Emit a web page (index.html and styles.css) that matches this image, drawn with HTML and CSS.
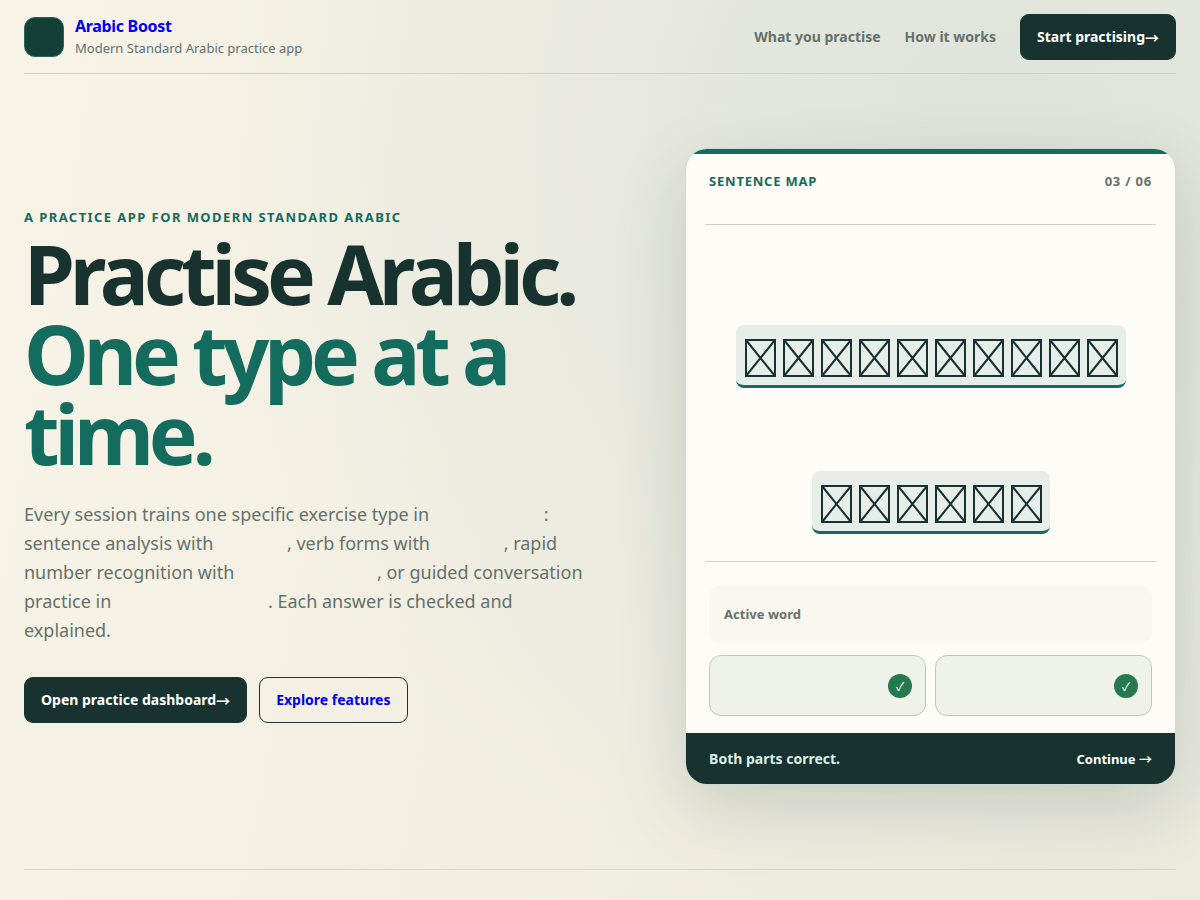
FILE: index.html
```html
<!DOCTYPE html>
<html lang="en">
<head>
<meta charset="utf-8">
<meta name="viewport" content="width=device-width, initial-scale=1">
<title>Arabic Boost</title>
<link rel="stylesheet" href="styles.css">
</head>
<body>
<svg class="defs" aria-hidden="true">
  <symbol id="letter" viewBox="0 0 38 38">
    <path d="M5 1H34V37H5Z M5 1L34 37 M34 1L5 37" fill="none" stroke="currentColor" stroke-width="2"/>
  </symbol>
</svg>
<div class="page">
  <header class="header">
    <a class="brand" href="#">
      <span class="brand-mark"></span>
      <span class="brand-text"><strong>Arabic Boost</strong><small>Modern Standard Arabic practice app</small></span>
    </a>
    <nav class="nav">
      <a href="#practice">What you practise</a>
      <a href="#how">How it works</a>
      <a class="button primary" href="#start">Start practising<span class="arrow">→</span></a>
    </nav>
  </header>
  <main class="hero">
    <section class="intro">
      <p class="eyebrow">A practice app for Modern Standard Arabic</p>
      <h1>Practise Arabic. <span>One type at a time.</span></h1>
      <p class="lead">Every session trains one specific exercise type in <i class="term wide"></i>: sentence analysis with <i class="term short"></i>, verb forms with <i class="term short"></i>, rapid number recognition with <i class="term large"></i>, or guided conversation practice in <i class="term full"></i>. Each answer is checked and explained.</p>
      <div class="actions">
        <a class="button primary" href="#start">Open practice dashboard<span class="arrow">→</span></a>
        <a class="button outline" href="#practice">Explore features</a>
      </div>
    </section>
    <section class="card" aria-label="Sentence map">
      <div class="card-head"><span>Sentence map</span><span class="count">03 / 06</span></div>
      <div class="sentence">
        <div class="word">
          <svg><use href="#letter"/></svg><svg><use href="#letter"/></svg><svg><use href="#letter"/></svg><svg><use href="#letter"/></svg><svg><use href="#letter"/></svg><svg><use href="#letter"/></svg><svg><use href="#letter"/></svg><svg><use href="#letter"/></svg><svg><use href="#letter"/></svg><svg><use href="#letter"/></svg>
        </div>
        <div class="word">
          <svg><use href="#letter"/></svg><svg><use href="#letter"/></svg><svg><use href="#letter"/></svg><svg><use href="#letter"/></svg><svg><use href="#letter"/></svg><svg><use href="#letter"/></svg>
        </div>
      </div>
      <div class="answers">
        <div class="active">Active word</div>
        <div class="answer"><span class="check">✓</span></div>
        <div class="answer"><span class="check">✓</span></div>
      </div>
      <div class="card-foot"><span>Both parts correct.</span><button type="button">Continue <span class="arrow">→</span></button></div>
    </section>
  </main>
</div>
</body>
</html>
```
FILE: styles.css
```css
* { box-sizing: border-box; }

body {
  margin: 0;
  min-height: 100vh;
  font-family: "Noto Sans", "Noto Sans CJK JP", sans-serif;
  color: #18322f;
  background:
    radial-gradient(circle at 82% 16%, rgba(211, 221, 216, 0.6), transparent 64%),
    linear-gradient(100deg, #f8f3e7 0%, #f2efe2 45%, #ecebde 100%);
}

.defs { display: none; }
.page { padding: 0 24px; }

.header {
  display: flex;
  align-items: center;
  justify-content: space-between;
  height: 74px;
  border-bottom: 1px solid #cfd2c7;
}

.brand { display: flex; align-items: center; gap: 11px; text-decoration: none; }
.brand-mark {
  width: 40px;
  height: 40px;
  border: 1px solid #29665a;
  border-radius: 11px;
  background: #133f36;
}
.brand-text { display: grid; }
.brand-text strong { font-size: 16px; line-height: 22px; letter-spacing: -0.02em; color: #0000ee; }
.brand-text small { font-size: 13px; line-height: 22px; color: #64716d; }

.nav { display: flex; align-items: center; gap: 24px; }
.nav a { font-size: 14px; font-weight: 700; text-decoration: none; color: #64716d; }

.button {
  display: inline-flex;
  align-items: center;
  height: 46px;
  padding: 0 16px;
  border: 1px solid #18322f;
  border-radius: 9px;
  font-size: 14px;
  line-height: 20px;
  font-weight: 700;
  text-decoration: none;
}
.nav .button.primary, .button.primary { background: #18322f; color: #fff; }
.button.outline { color: #0000ee; }
.arrow { font-family: "Noto Sans CJK JP", sans-serif; line-height: 20px; }

.hero {
  display: grid;
  grid-template-columns: minmax(0, 12fr) minmax(0, 10fr);
  gap: 72px;
  align-items: center;
  min-height: 796px;
  padding: 74px 0 84px;
  border-bottom: 1px solid #d5d5c6;
}

.intro { padding-bottom: 4px; }
.eyebrow {
  margin: 0 0 6px;
  font-size: 13px;
  line-height: 20px;
  font-weight: 700;
  letter-spacing: 0.11em;
  text-transform: uppercase;
  color: #146c5e;
}
h1 {
  margin: 0;
  font-size: 82px;
  line-height: 80px;
  letter-spacing: -0.062em;
}
h1 span { display: block; color: #146c5e; }
.lead {
  margin: 27px 0 32px;
  max-width: 570px;
  font-size: 18px;
  line-height: 29px;
  color: #64716d;
}
.term { display: inline-block; }
.term.short { width: 69px; }
.term.wide { width: 110px; }
.term.large { width: 138px; }
.term.full { width: 152px; }
.actions { display: flex; gap: 12px; }

.card {
  overflow: hidden;
  border: 1px solid #c9dbd2;
  border-radius: 22px;
  background: #fdfcf6;
  box-shadow: 0 24px 70px rgba(24, 50, 47, 0.16);
}
.card::before { content: ""; display: block; height: 5px; background: #146c5e; }
.card-head {
  display: flex;
  justify-content: space-between;
  margin: 0 19px;
  padding: 17px 4px 33px;
  border-bottom: 1px solid #cbd0c4;
  font-size: 13px;
  line-height: 20px;
  font-weight: 700;
  letter-spacing: 0.06em;
  text-transform: uppercase;
  color: #146c5e;
}
.count { color: #64716d; }
.sentence {
  display: grid;
  justify-items: center;
  gap: 83px;
  margin: 0 19px;
  padding: 100px 0 27px;
  border-bottom: 1px solid #cbd0c4;
}
.word {
  display: flex;
  padding: 14px 5px 8px;
  border-bottom: 3px solid #146c5e;
  border-radius: 8px;
  background: #e7ede8;
}
.word svg { display: block; width: 38px; height: 38px; }
.answers {
  display: grid;
  grid-template-columns: 1fr 1fr;
  gap: 12px 9px;
  padding: 24px 23px 17px;
}
.active {
  grid-column: 1 / -1;
  padding: 19px 15px;
  border-radius: 11px;
  background: #faf7ef;
  font-size: 13px;
  line-height: 19px;
  font-weight: 700;
  color: #64716d;
}
.answer {
  display: flex;
  align-items: center;
  justify-content: flex-end;
  height: 61px;
  padding: 0 13px;
  border: 1px solid #aed0bb;
  border-radius: 12px;
  background: #eef2e9;
}
.check {
  display: grid;
  place-items: center;
  width: 24px;
  height: 24px;
  border-radius: 50%;
  background: #257a4d;
  color: #fff;
  font-family: "Noto Sans CJK JP", sans-serif;
  font-size: 12px;
  line-height: 24px;
}
.card-foot {
  display: flex;
  align-items: center;
  justify-content: space-between;
  height: 51px;
  padding: 0 23px;
  background: #18322f;
  color: #d9f0e8;
  font-size: 14px;
  font-weight: 700;
}
.card-foot button {
  padding: 0;
  border: 0;
  background: none;
  color: #fff;
  font: 700 13px/20px "Noto Sans", sans-serif;
}

@media (max-width: 900px) {
  .hero { grid-template-columns: minmax(0, 1fr); }
  .nav a:not(.button) { display: none; }
}
```
